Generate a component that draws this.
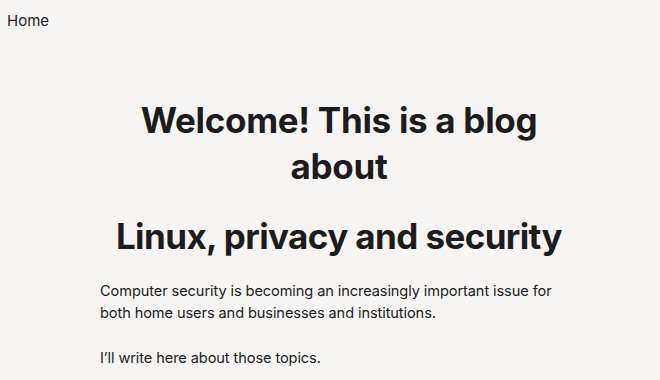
import React from 'react';

const App: React.FC = () => {
    return (
        <div className="min-h-screen bg-[#f6f5f3] text-[#1c1c1c]" style={{ fontFamily: 'Inter, "Noto Sans", sans-serif' }}>
            <nav className="px-[7px] pt-[8px]">
                <a href="#" className="text-[15px] leading-[20px] text-[#1c1c1c]">Home</a>
            </nav>
            <main className="ml-[100px] w-[478px] pt-[65px]">
                <h1 className="text-center text-[35px] font-bold leading-[46px] tracking-[-0.3px]">
                    Welcome! This is a blog about
                </h1>
                <h1 className="mt-[24px] text-center text-[35px] font-bold leading-[46px] tracking-[-0.6px]">
                    Linux, privacy and security
                </h1>
                <p className="mt-[21px] text-[14.6px] leading-[22px] tracking-[-0.1px]">
                    Computer security is becoming an increasingly important issue for both home users and businesses and institutions.
                </p>
                <p className="mt-[23px] text-[14.6px] leading-[22px] tracking-[-0.1px]">
                    I’ll write here about those topics.
                </p>
            </main>
        </div>
    );
};

export default App;
